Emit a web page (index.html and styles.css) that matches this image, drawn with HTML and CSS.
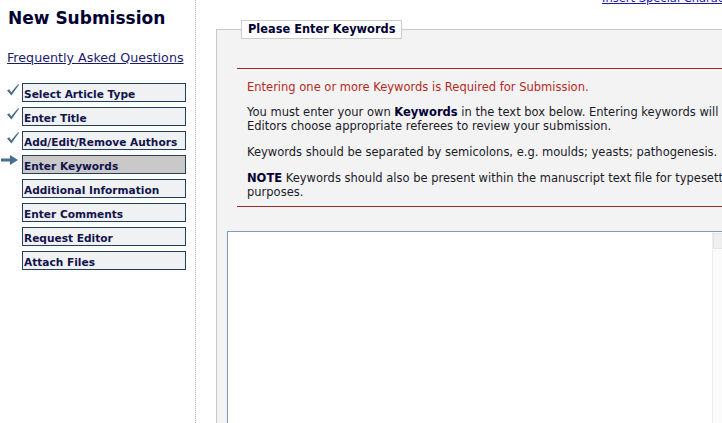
FILE: index.html
```html
<!DOCTYPE html>
<html lang="en">
<head>
  <meta charset="UTF-8" />
  <meta name="viewport" content="width=device-width, initial-scale=1.0" />
  <title>New Submission - Enter Keywords</title>
  <link rel="stylesheet" href="styles.css">
</head>
<body>
<div class="page">
  <div class="sidebar">
    <h1>New Submission</h1>
    <a class="faq" href="#">Frequently Asked Questions</a>
    <ul class="steps">
      <li class="done">
        <span class="mark"><svg viewBox="0 0 14 14" width="14" height="14"><path d="M1 7.5 L3.2 6.2 L5.2 9.2 L12.2 1 L13 1.8 L5.4 12.6 Z" fill="#4a6e8e"/></svg></span>
        <span class="step">Select Article Type</span>
      </li>
      <li class="done">
        <span class="mark"><svg viewBox="0 0 14 14" width="14" height="14"><path d="M1 7.5 L3.2 6.2 L5.2 9.2 L12.2 1 L13 1.8 L5.4 12.6 Z" fill="#4a6e8e"/></svg></span>
        <span class="step">Enter Title</span>
      </li>
      <li class="done">
        <span class="mark"><svg viewBox="0 0 14 14" width="14" height="14"><path d="M1 7.5 L3.2 6.2 L5.2 9.2 L12.2 1 L13 1.8 L5.4 12.6 Z" fill="#4a6e8e"/></svg></span>
        <span class="step">Add/Edit/Remove Authors</span>
      </li>
      <li class="current">
        <span class="mark"><svg viewBox="0 0 18 12" width="18" height="12"><path d="M0 3.5 H9 V0 L17 5 L9 10 V6.5 H0 Z" fill="#4a6e8e"/></svg></span>
        <span class="step">Enter Keywords</span>
      </li>
      <li><span class="mark"></span><span class="step">Additional Information</span></li>
      <li><span class="mark"></span><span class="step">Enter Comments</span></li>
      <li><span class="mark"></span><span class="step">Request Editor</span></li>
      <li><span class="mark"></span><span class="step">Attach Files</span></li>
    </ul>
  </div>

  <div class="main">
    <div class="toolbar"><a href="#">Insert Special Characters</a></div>
    <fieldset class="panel">
      <legend>Please Enter Keywords</legend>
      <div class="notice">
        <p class="required">Entering one or more Keywords is Required for Submission.</p>
        <p>You must enter your own <b>Keywords</b> in the text box below. Entering keywords will help<br>Editors choose appropriate referees to review your submission.</p>
        <p>Keywords should be separated by semicolons, e.g. moulds; yeasts; pathogenesis.</p>
        <p><b>NOTE</b> Keywords should also be present within the manuscript text file for typesetting<br>purposes.</p>
      </div>
      <div class="keyword-box">
        <textarea></textarea>
        <div class="scrollbar"><span class="scroll-btn"></span></div>
      </div>
    </fieldset>
  </div>
</div>
</body>
</html>
```

FILE: styles.css
```css
html, body {
  margin: 0;
  padding: 0;
  overflow: hidden;
  background: #fff;
}

body {
  font-family: "DejaVu Sans", Verdana, sans-serif;
  font-size: 11px;
  color: #000033;
}

.page {
  display: flex;
  width: 800px;
  height: 423px;
}

.sidebar {
  width: 195px;
  flex: none;
  border-right: 1px dotted #b8b8b8;
}

h1 {
  font-size: 17px;
  line-height: 20px;
  margin: 8px 0 0 8px;
  color: #000033;
}

.faq {
  display: block;
  margin: 22px 0 0 7px;
  font-size: 12.7px;
  line-height: 16px;
  color: #1c1c6e;
}

.steps {
  list-style: none;
  margin: 17px 0 0 0;
  padding: 0;
  display: flex;
  flex-direction: column;
  gap: 5px;
}

.steps li {
  display: flex;
  align-items: center;
}

.mark {
  width: 22px;
  height: 19px;
  display: flex;
  align-items: center;
  justify-content: center;
}

.done .mark {
  padding-left: 4px;
  box-sizing: border-box;
  align-items: flex-start;
}

.current .mark {
  padding-right: 2px;
  box-sizing: border-box;
  align-items: flex-start;
}

.step {
  border: 1px solid #22405e;
  background: #eff1f3;
  font-weight: bold;
  font-size: 10.6px;
  line-height: 14px;
  padding-top: 3px;
  padding-left: 1px;
  box-sizing: border-box;
  height: 19px;
  width: 164px;
  color: #13134a;
  white-space: nowrap;
  overflow: hidden;
}

.current .step {
  background: #c9c9c9;
}

.main {
  width: 580px;
  flex: none;
  padding-left: 20px;
}

.toolbar {
  margin-top: -9px;
  height: 29px;
  padding-left: 386px;
  font-size: 11.5px;
  line-height: 14px;
}

.toolbar a {
  color: #1a1aa8;
}

.panel {
  margin: 0;
  padding: 0 0 0 10px;
  border: 1px solid #c9c9c9;
  border-right: none;
  border-bottom: none;
  background: #f3f3f3;
  height: 420px;
}

.panel legend {
  margin-left: 14px;
  padding: 0 6px;
  border: 1px solid #cccccc;
  background: #fff;
  font-weight: bold;
  font-size: 11.4px;
  line-height: 17px;
  color: #000033;
}

.notice {
  margin: 29px 0 0 10px;
  border-top: 1px solid #9e2b25;
  border-bottom: 1px solid #9e2b25;
  padding: 11px 10px 7px 10px;
  color: #1a1a2a;
  font-size: 11.5px;
}

.notice p {
  margin: 0 0 12px 0;
  line-height: 14px;
  white-space: nowrap;
}

.notice p:last-child {
  margin-bottom: 0;
}

.notice .required {
  color: #b52a26;
  margin-bottom: 11px;
}

.notice b {
  color: #000033;
}

.keyword-box {
  display: flex;
  margin-top: 24px;
  border: 1px solid #7f9db9;
  background: #fff;
  height: 260px;
}

.keyword-box textarea {
  width: 484px;
  flex: none;
  border: none;
  resize: none;
  outline: none;
  margin: 0;
  padding: 0;
  background: #fff;
}

.scrollbar {
  flex: 1;
  border-left: 1px solid #ececec;
  background: #fbfbfb;
  padding-top: 1px;
}

.scroll-btn {
  display: block;
  width: 15px;
  height: 14px;
  background: #efefef;
  border: 1px solid #e4e4e4;
}
```
